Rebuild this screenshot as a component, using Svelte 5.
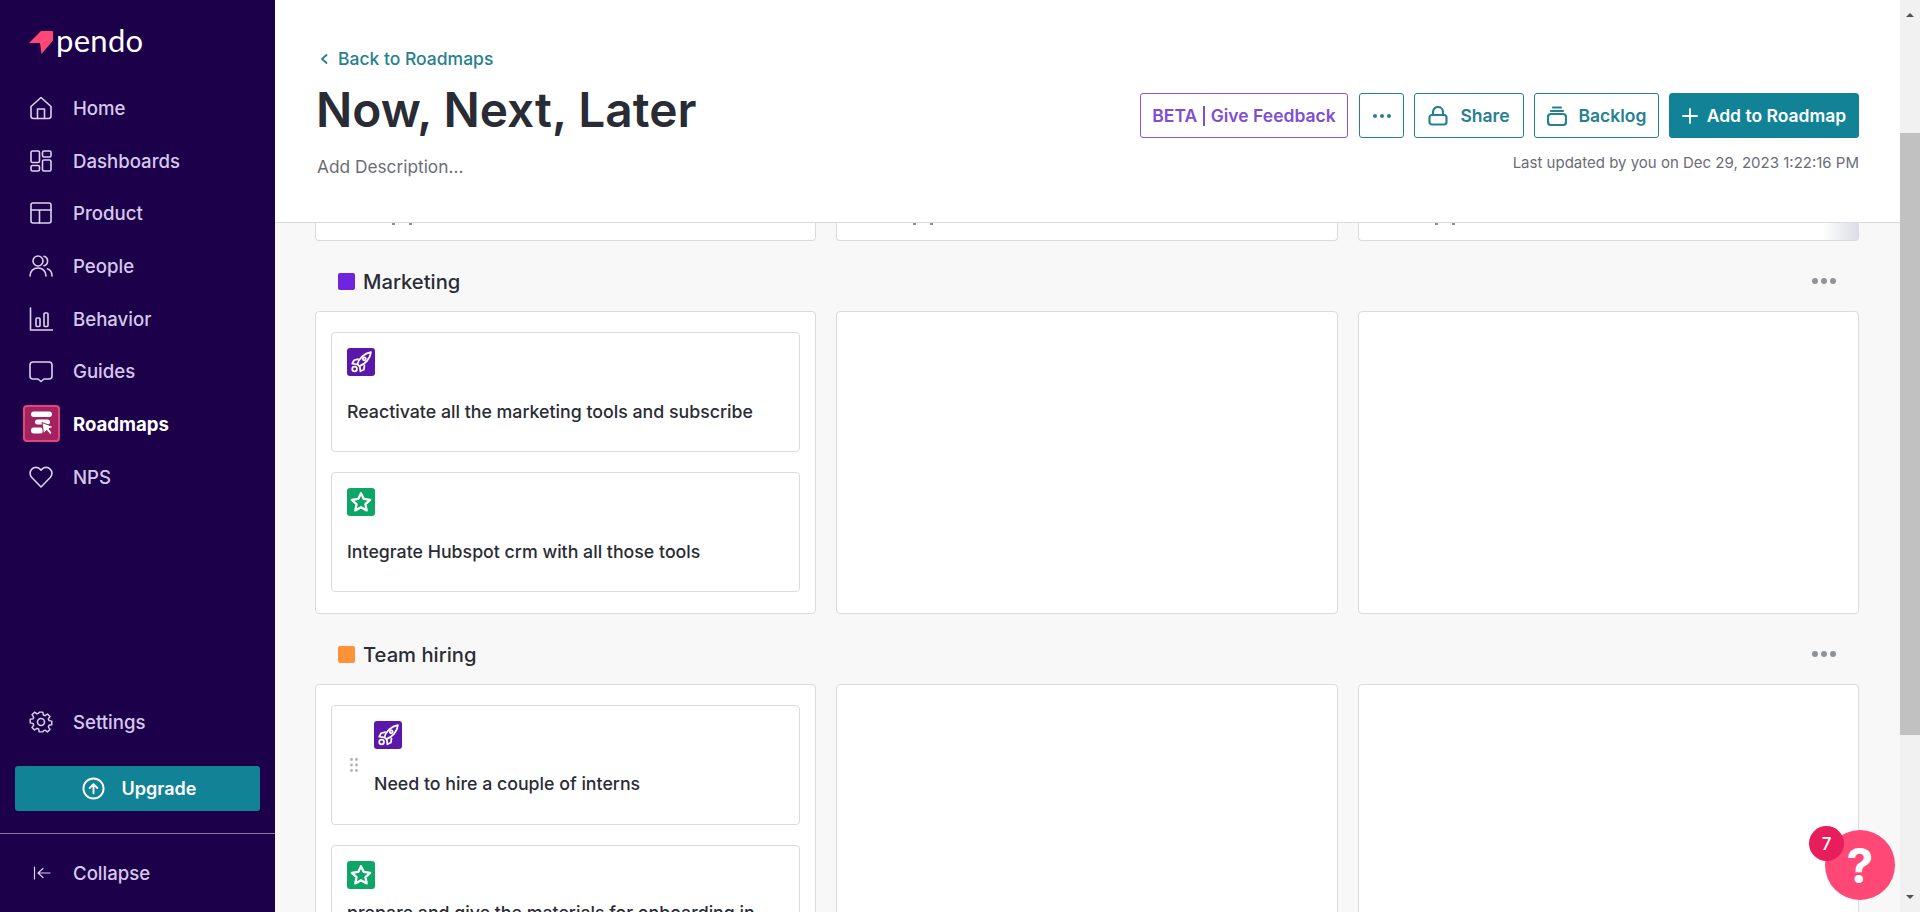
<script>
  const nav = [
    { label: 'Home', icon: 'home' },
    { label: 'Dashboards', icon: 'dash' },
    { label: 'Product', icon: 'product' },
    { label: 'People', icon: 'people' },
    { label: 'Behavior', icon: 'behavior' },
    { label: 'Guides', icon: 'guides' },
    { label: 'Roadmaps', icon: 'roadmaps', active: true },
    { label: 'NPS', icon: 'nps' }
  ];
</script>

{#snippet navIcon(name)}
  <svg class="nav-icon" viewBox="0 0 24 24" fill="none" stroke="currentColor" stroke-width="1.6" stroke-linejoin="round" stroke-linecap="round">
    {#if name === 'home'}
      <path d="M2 10.5 12 1.5l10 9V20a2.5 2.5 0 0 1-2.5 2.5h-15A2.5 2.5 0 0 1 2 20z" /><path d="M8.5 22.5V13h7v9.5" />
    {:else if name === 'dash'}
      <rect x="2" y="2" width="8.5" height="11.5" rx="1.5" /><rect x="13.5" y="2" width="8.5" height="6" rx="1.5" /><rect x="2" y="16.5" width="8.5" height="5.5" rx="1.5" /><rect x="13.5" y="11" width="8.5" height="11" rx="1.5" />
    {:else if name === 'product'}
      <rect x="2" y="2" width="20" height="20" rx="2" /><path d="M2 9h20M10.5 9v13" />
    {:else if name === 'people'}
      <circle cx="9" cy="7" r="5" /><path d="M1 22c0-5 3.5-8 8-8s8 3 8 8" /><path d="M15 2.2a5 5 0 0 1 0 9.6M18.5 14.8c2.8 1 4.5 3.6 4.5 7.2" />
    {:else if name === 'behavior'}
      <path d="M1.5 1v22h22" /><rect x="7" y="11" width="4" height="8.5" rx="1" /><rect x="15" y="6" width="4" height="13.5" rx="1" />
    {:else if name === 'guides'}
      <path d="M4 3h16a3 3 0 0 1 3 3v11a3 3 0 0 1-3 3h-5l-3 2.5L9 20H4a3 3 0 0 1-3-3V6a3 3 0 0 1 3-3z" />
    {:else if name === 'nps'}
      <path d="M12 22 2.8 12.5a6 6 0 0 1 0-8.4 5.8 5.8 0 0 1 8.2 0l1 1 1-1a5.8 5.8 0 0 1 8.2 0 6 6 0 0 1 0 8.4z" />
    {/if}
  </svg>
{/snippet}

{#snippet rocket()}
  <span class="badge rocket">
    <svg viewBox="0 0 24 24" fill="none" stroke="#fff" stroke-width="1.5" stroke-linejoin="round" stroke-linecap="round">
      <path d="M9 14C10 9 15 4.5 20.5 3.5 20 9 15.5 14 10.5 15.5z" /><circle cx="14.8" cy="9.3" r="1.3" /><path d="M9.5 9.5 6 10.5l-1.500 3 4 .5M15 15l-.5 3.500-3 1.500-.5-4" /><circle cx="6.5" cy="18" r="2" />
    </svg>
  </span>
{/snippet}

{#snippet star()}
  <span class="badge star">
    <svg viewBox="-1.5 -1.5 27 27" fill="none" stroke="#fff" stroke-width="2.2" stroke-linejoin="round">
      <path d="m12 3.5 2.7 5.6 6.1.8-4.5 4.2 1.2 6-5.5-3-5.5 3 1.2-6-4.5-4.2 6.1-.8z" />
    </svg>
  </span>
{/snippet}

<div class="app">
  <aside class="sidebar">
    <div class="logo">
      <svg class="mark" viewBox="0 0 24 24"><path d="M0 12 12 0h11a1 1 0 0 1 1 1v8.5L12.5 23 11 12z" fill="#ff4876" /></svg>
      <span class="word">pendo</span>
    </div>
    <nav class="nav">
      {#each nav as item}
        <div class="nav-item" class:active={item.active}>
          {#if item.icon === 'roadmaps'}
            <span class="road-icon">
              <svg viewBox="0 0 33 33" fill="#fff">
                <rect x="6" y="4.5" width="21" height="5.5" rx="2.7" />
                <rect x="10" y="12.5" width="15" height="5" rx="2.5" />
                <rect x="6" y="20.5" width="12" height="6" rx="2.7" />
                <path d="M17 15.5 29 20l-5 1.8 3.2 4.2-2.2 1.6-3.2-4.2-3.3 3.2z" stroke="#a3235f" stroke-width="1" />
              </svg>
            </span>
          {:else}
            {@render navIcon(item.icon)}
          {/if}
          <span>{item.label}</span>
        </div>
      {/each}
    </nav>
    <div class="nav-item settings">
      <svg class="nav-icon" viewBox="0 0 24 24" fill="none" stroke="currentColor" stroke-width="1.6" stroke-linejoin="round">
        <circle cx="12" cy="12" r="3.5" />
        <path d="M10 1h4l.6 3.2 1.9.8 2.7-1.9 2.8 2.8-1.9 2.7.8 1.9 3.1.5v4l-3.1.6-.8 1.9 1.9 2.7-2.8 2.8-2.7-1.900-1.900.8L14 23h-4l-.6-3.200-1.900-.8-2.700 1.900L2 18.100l1.900-2.700-.8-1.900L0 13v-4l3.100-.5.800-1.900L2 3.900 4.800 1.100l2.700 1.900 1.900-.8z" transform="translate(1.2 1.2) scale(.9)" />
      </svg>
      <span>Settings</span>
    </div>
    <div class="upgrade">
      <svg viewBox="0 0 24 24" fill="none" stroke="#fff" stroke-width="2" stroke-linecap="round" stroke-linejoin="round"><circle cx="12" cy="12" r="10.5" /><path d="M12 17V8M8 11.5 12 7.5l4 4" /></svg>
      <span>Upgrade</span>
    </div>
    <div class="divider"></div>
    <div class="nav-item collapse">
      <svg class="nav-icon" viewBox="0 0 24 24" fill="none" stroke="currentColor" stroke-width="1.2" stroke-linecap="round" stroke-linejoin="round"><path d="M5.5 6v12M21 12H9M14 7.5 9 12l5 4.5" /></svg>
      <span>Collapse</span>
    </div>
  </aside>

  <main class="main">
    <div class="content">
      <header class="header">
        <div class="head-left">
          <div class="back">
            <svg viewBox="0 0 10 12" fill="none" stroke="currentColor" stroke-width="1.8" stroke-linecap="round" stroke-linejoin="round"><path d="M7.5 2 3 6l4.5 4" /></svg>
            <span>Back to Roadmaps</span>
          </div>
          <h1>Now, Next, Later</h1>
          <div class="desc">Add Description...</div>
        </div>
        <div class="head-right">
          <div class="actions">
            <button class="btn beta">BETA <i></i> Give Feedback</button>
            <button class="btn more" aria-label="More"><b></b><b></b><b></b></button>
            <button class="btn share">
              <svg viewBox="0 0 20 20" fill="none" stroke="currentColor" stroke-width="2.2"><rect x="1.5" y="9" width="17" height="9.5" rx="2.5" /><path d="M5 9V6a5 5 0 0 1 10 0v3" /></svg>
              Share
            </button>
            <button class="btn backlog">
              <svg viewBox="0 0 20 20" fill="none" stroke="currentColor" stroke-width="2.2" stroke-linecap="round"><rect x="1" y="8" width="18" height="11" rx="3" /><path d="M4 5h12M6 1.5h8" /></svg>
              Backlog
            </button>
            <button class="btn add">
              <svg viewBox="0 0 16 16" fill="none" stroke="#fff" stroke-width="1.8" stroke-linecap="round"><path d="M8 1v14M1 8h14" /></svg>
              Add to Roadmap
            </button>
          </div>
          <div class="updated">Last updated by you on Dec 29, 2023 1:22:16 PM</div>
        </div>
      </header>

      <section class="board">
        <div class="cols clipped">
          <div class="col frag"><i></i><i></i></div>
          <div class="col frag"><i></i><i></i></div>
          <div class="col frag fade"><i></i><i></i></div>
        </div>

        <div class="group-head">
          <span class="swatch purple"></span>
          <span class="group-name">Marketing</span>
          <span class="dots"><b></b><b></b><b></b></span>
        </div>
        <div class="cols row-a">
          <div class="col list">
            <div class="card">
              {@render rocket()}
              <div class="title">Reactivate all the marketing tools and subscribe</div>
            </div>
            <div class="card">
              {@render star()}
              <div class="title">Integrate Hubspot crm with all those tools</div>
            </div>
          </div>
          <div class="col"></div>
          <div class="col"></div>
        </div>

        <div class="group-head">
          <span class="swatch orange"></span>
          <span class="group-name">Team hiring</span>
          <span class="dots"><b></b><b></b><b></b></span>
        </div>
        <div class="cols row-b">
          <div class="col list">
            <div class="card hovered">
              <svg class="grip" viewBox="0 0 10 16" fill="#aeb1b8"><circle cx="2.5" cy="2.5" r="1.4" /><circle cx="7.5" cy="2.5" r="1.4" /><circle cx="2.5" cy="8" r="1.4" /><circle cx="7.5" cy="8" r="1.4" /><circle cx="2.5" cy="13.5" r="1.4" /><circle cx="7.5" cy="13.5" r="1.4" /></svg>
              {@render rocket()}
              <div class="title">Need to hire a couple of interns</div>
            </div>
            <div class="card">
              {@render star()}
              <div class="title two">prepare and give the materials for onboarding in</div>
            </div>
          </div>
          <div class="col"></div>
          <div class="col"></div>
        </div>
      </section>
    </div>

    <div class="scrollbar">
      <span class="arrow up"></span>
      <div class="track"><div class="thumb"></div></div>
      <span class="arrow down"></span>
    </div>

    <div class="help">
      <span class="q">?</span>
      <span class="count">7</span>
    </div>
  </main>
</div>

<style>
  :global(body) {
    margin: 0;
    overflow: hidden;
    font-family: Inter, "Liberation Sans", sans-serif;
  }
  .app {
    display: flex;
    height: 912px;
    overflow: hidden;
    background: #f8f8f8;
  }
  .sidebar {
    width: 275px;
    flex: none;
    box-sizing: border-box;
    background: #1c0049;
    color: #d6c8ec;
    display: flex;
    flex-direction: column;
    font-size: 18.6px;
    font-weight: 500;
  }
  .logo {
    display: flex;
    align-items: center;
    height: 42px;
    padding: 22px 0 0 29px;
    margin-bottom: 17.5px;
  }
  .mark {
    width: 24px;
    height: 24px;
  }
  .word {
    color: #fff;
    font-family: Lato, sans-serif;
    font-size: 31px;
    font-weight: 400;
    line-height: 30px;
    letter-spacing: .3px;
    margin: -6px 0 0 3px;
  }
  .nav {
    display: flex;
    flex-direction: column;
    flex: 1;
  }
  .nav-item {
    height: 52.7px;
    display: flex;
    align-items: center;
    padding-left: 29px;
    gap: 20px;
    flex: none;
  }
  .nav-icon {
    width: 24px;
    height: 24px;
    flex: none;
    color: #ddd0f0;
  }
  .active {
    color: #fff;
    font-weight: 700;
  }
  .road-icon {
    width: 37px;
    height: 37px;
    box-sizing: border-box;
    margin: 0 -6.5px;
    background: #a3235f;
    border: 2px solid #e0457b;
    border-radius: 4px;
    flex: none;
  }
  .road-icon svg {
    display: block;
    width: 33px;
    height: 33px;
  }
  .settings {
    height: 44px;
    margin-bottom: 22px;
  }
  .upgrade {
    margin: 0 15px;
    height: 45px;
    padding-left: 3px;
    border-radius: 3px;
    background: #128297;
    color: #fff;
    font-size: 18px;
    font-weight: 600;
    display: flex;
    align-items: center;
    justify-content: center;
    gap: 17px;
    flex: none;
  }
  .upgrade svg {
    width: 23px;
    height: 23px;
  }
  .divider {
    height: 1px;
    margin-top: 22px;
    background: #8a76ae;
    flex: none;
  }
  .collapse {
    height: 78px;
  }
  .main {
    flex: 1;
    display: flex;
    position: relative;
    min-width: 0;
  }
  .content {
    flex: 1;
    min-width: 0;
    display: flex;
    flex-direction: column;
    overflow: hidden;
  }
  .header {
    height: 223px;
    flex: none;
    box-sizing: border-box;
    background: #fff;
    border-bottom: 1px solid #d9dbe0;
    padding: 46px 41px 0 41px;
    display: flex;
    justify-content: space-between;
  }
  .back {
    display: flex;
    align-items: center;
    gap: 9px;
    margin-left: 3px;
    padding-top: 1px;
    color: #26808f;
    font-size: 17.5px;
    font-weight: 500;
    line-height: 24px;
  }
  .back svg {
    width: 10px;
    height: 12px;
  }
  h1 {
    margin: 11px 0 0;
    font-size: 47.8px;
    line-height: 56px;
    font-weight: 600;
    color: #2a2c35;
    font-family: Inter, sans-serif;
  }
  .desc {
    margin: 17px 0 0 1px;
    color: #6a6d75;
    font-size: 17.3px;
    line-height: 24px;
  }
  .head-right {
    display: flex;
    flex-direction: column;
    align-items: flex-end;
    padding-top: 47px;
  }
  .actions {
    display: flex;
    gap: 10px;
  }
  .btn {
    height: 45px;
    box-sizing: border-box;
    display: flex;
    align-items: center;
    justify-content: center;
    border: 1px solid #26808f;
    border-radius: 3px;
    background: #fff;
    color: #26808f;
    font: 600 17.5px Inter, sans-serif;
    padding: 0;
    gap: 12px;
    white-space: nowrap;
  }
  .btn svg {
    width: 20px;
    height: 20px;
  }
  .beta {
    color: #7e4fd0;
    border-color: #8a55d6;
    gap: 6px;
    width: 208px;
    margin-right: 1px;
  }
  .beta i {
    display: block;
    width: 1.5px;
    height: 20px;
    background: #7e4fd0;
  }
  .more {
    width: 45px;
    gap: 3px;
  }
  .more b {
    width: 4px;
    height: 4px;
    border-radius: 50%;
    background: #26808f;
  }
  .share { width: 110px; }
  .backlog { width: 125px; }
  .add {
    width: 190px;
    background: #128297;
    border-color: #128297;
    color: #fff;
    gap: 9px;
  }
  .add svg {
    width: 16px;
    height: 16px;
  }
  .updated {
    margin-top: 14px;
    font-size: 15px;
    line-height: 22px;
    color: #6a6d75;
  }
  .board {
    flex: 1;
    padding: 0 41px 0 40px;
    min-height: 0;
  }
  .cols {
    display: grid;
    grid-template-columns: repeat(3, 1fr);
    gap: 20px;
  }
  .col {
    background: #fff;
    border: 1px solid #d9dbe0;
    border-radius: 4px;
    box-sizing: border-box;
  }
  .clipped {
    height: 18px;
  }
  .clipped .col {
    border-top: 0;
    border-top-left-radius: 0;
    border-top-right-radius: 0;
  }
  .frag {
    display: flex;
    align-items: flex-start;
    gap: 14px;
    padding-left: 76px;
  }
  .frag i {
    display: block;
    width: 3px;
    height: 2px;
    background: #8b8d93;
  }
  .fade {
    background: linear-gradient(90deg, #fff 93%, #dcdee5 100%);
  }
  .group-head {
    height: 70px;
    display: flex;
    align-items: center;
    padding: 10px 23px 0 23px;
    font-size: 20.2px;
    font-weight: 500;
    color: #2a2c35;
    box-sizing: border-box;
  }
  .swatch {
    width: 17px;
    height: 17px;
    border-radius: 2px;
    margin-right: 8px;
  }
  .purple { background: #6f24e0; }
  .orange { background: #ff9238; }
  .group-name {
    flex: 1;
  }
  .dots {
    display: flex;
    gap: 3px;
    margin-top: -1px;
  }
  .dots b {
    width: 6px;
    height: 6px;
    border-radius: 50%;
    background: #8f9299;
  }
  .row-a {
    height: 303px;
  }
  .row-b {
    height: 400px;
  }
  .list {
    padding: 20px 15px;
    display: flex;
    flex-direction: column;
    gap: 20px;
  }
  .card {
    position: relative;
    height: 120px;
    flex: none;
    box-sizing: border-box;
    border: 1px solid #d9dbe0;
    border-radius: 4px;
    padding: 15px 15px;
  }
  .hovered {
    padding-left: 42px;
  }
  .hovered .title {
    margin-top: 23px;
  }
  .grip {
    position: absolute;
    left: 17px;
    top: 51px;
    width: 10px;
    height: 16px;
  }
  .badge {
    display: block;
    width: 28px;
    height: 28px;
    border-radius: 3px;
  }
  .badge svg {
    display: block;
    width: 28px;
    height: 28px;
  }
  .rocket { background: #5b16ac; }
  .star { background: #0ea667; }
  .title {
    margin-top: 23.5px;
    font-size: 17.75px;
    font-weight: 500;
    line-height: 24px;
    color: #2a2c35;
    white-space: nowrap;
  }
  .title.two {
    margin-top: 12px;
  }
  .scrollbar {
    width: 20px;
    flex: none;
    background: #f1f1f1;
    display: flex;
    flex-direction: column;
    align-items: center;
  }
  .track {
    flex: 1;
    width: 100%;
    padding: 116px 0 160px;
    box-sizing: border-box;
  }
  .thumb {
    height: 100%;
    background: #c1c1c1;
  }
  .arrow {
    height: 17px;
    flex: none;
    width: 0;
    box-sizing: border-box;
    border-left: 4px solid transparent;
    border-right: 4px solid transparent;
  }
  .arrow.up {
    height: 17px;
    border-bottom: 4px solid #505050;
    border-top: 7px solid transparent;
  }
  .arrow.down {
    border-top: 4px solid #505050;
    border-bottom: 7px solid transparent;
  }
  .help {
    position: absolute;
    right: 25px;
    bottom: 12px;
    width: 70px;
    height: 70px;
    border-radius: 50%;
    background: #ff4876;
    display: flex;
    align-items: center;
    justify-content: center;
    color: #fff;
  }
  .q {
    font: 700 48px/1 Inter, sans-serif;
    margin-top: 2px;
  }
  .count {
    position: absolute;
    left: -16px;
    top: -4px;
    width: 35px;
    height: 35px;
    border-radius: 50%;
    background: #e81d5b;
    display: flex;
    align-items: center;
    justify-content: center;
    font-size: 17px;
    font-weight: 500;
  }
</style>
